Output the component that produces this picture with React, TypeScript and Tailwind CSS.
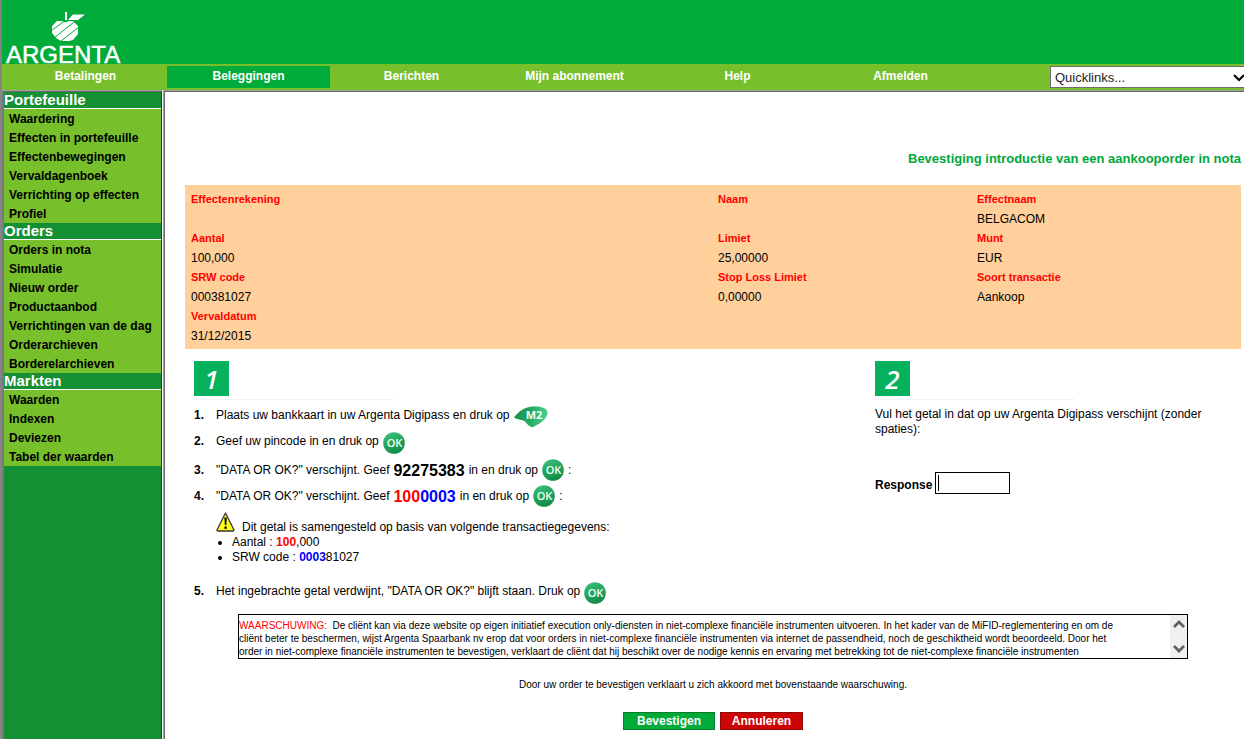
import type { ReactNode } from "react";

const tabs = ["Betalingen", "Beleggingen", "Berichten", "Mijn abonnement", "Help", "Afmelden"];

const menu = [
  {
    title: "Portefeuille",
    items: [
      "Waardering",
      "Effecten in portefeuille",
      "Effectenbewegingen",
      "Vervaldagenboek",
      "Verrichting op effecten",
      "Profiel",
    ],
  },
  {
    title: "Orders",
    items: [
      "Orders in nota",
      "Simulatie",
      "Nieuw order",
      "Productaanbod",
      "Verrichtingen van de dag",
      "Orderarchieven",
      "Borderelarchieven",
    ],
  },
  { title: "Markten", items: ["Waarden", "Indexen", "Deviezen", "Tabel der waarden"] },
];

const details = [
  ["Effectenrekening", ""],
  ["Naam", ""],
  ["Effectnaam", "BELGACOM"],
  ["Aantal", "100,000"],
  ["Limiet", "25,00000"],
  ["Munt", "EUR"],
  ["SRW code", "000381027"],
  ["Stop Loss Limiet", "0,00000"],
  ["Soort transactie", "Aankoop"],
  ["Vervaldatum", "31/12/2015"],
];

function Logo() {
  return (
    <svg width="124" height="64" viewBox="0 0 124 64" className="overflow-visible" role="img" aria-label="Argenta">
      <g fill="#fff">
        <path d="M61 12h2v8h-2z" />
        <path d="M64 20 L69 14.5 H81 L74 20z" />
        <path d="M53 21 h5 l3 1.5 4-1.5 h4 l5 5 v8 l-5 6 -4 1 h-8 l-5-3 -4-5 v-7z" />
      </g>
      <g stroke="#00ab39" strokeWidth="1" fill="none">
        <path d="M47 31 L61 20.500M50 38 L70 22M57 41 L75 27" />
      </g>
      <text
        x="2"
        y="63"
        fontSize="24"
        fill="#fff"
        stroke="#fff"
        strokeWidth="0.5"
        fontFamily="'Liberation Sans', Arial, sans-serif"
      >
        ARGENTA
      </text>
    </svg>
  );
}

function OkIcon() {
  return (
    <svg width="22" height="22" viewBox="0 0 22 22" className="shrink-0" role="img" aria-label="OK">
      <defs>
        <linearGradient id="okFill" x1="0.2" y1="0" x2="0.6" y2="1">
          <stop offset="0" stopColor="#3cc07c" />
          <stop offset="0.5" stopColor="#22a55d" />
          <stop offset="1" stopColor="#128a48" />
        </linearGradient>
      </defs>
      <circle cx="11" cy="11" r="10.8" fill="url(#okFill)" />
      <text x="11.500" y="15" textAnchor="middle" fontSize="11" fontWeight="600" fill="#f2fff6" fontFamily="'Open Sans', sans-serif">
        OK
      </text>
    </svg>
  );
}

function M2Icon() {
  return (
    <svg width="34" height="22" viewBox="0 0 34 22" className="shrink-0" role="img" aria-label="M2">
      <defs>
        <linearGradient id="m2Fill" x1="0" y1="0.4" x2="1" y2="0.5">
          <stop offset="0" stopColor="#168f4c" />
          <stop offset="0.5" stopColor="#25aa63" />
          <stop offset="1" stopColor="#4fd095" />
        </linearGradient>
      </defs>
      <path
        d="M0 11.500 C4 6 10 1 18 0.500 C27 0 33 2 33.500 6 C34 12 28 17 18 21.500 C15 20 13 18 11 15.500 C9 13.500 4 14 0 11.500z"
        fill="url(#m2Fill)"
      />
      <text x="20" y="12.500" textAnchor="middle" fontSize="11" fontWeight="700" fill="#f2fff6" fontFamily="'Open Sans', sans-serif">
        M2
      </text>
    </svg>
  );
}

function WarningIcon() {
  return (
    <svg width="19" height="20" viewBox="0 0 19 20" className="shrink-0" aria-hidden="true">
      <path d="M9.5 1 L18 18 Q18 19 17 19 H2 Q0.8 19 1 18z" fill="#ffff1a" stroke="#333" strokeWidth="1.3" strokeLinejoin="round" />
      <path d="M8.4 5.5 h2.4 l-0.5 7.5 h-1.4z" fill="#000" />
      <rect x="8.5" y="14.5" width="2.2" height="2.4" fill="#000" />
    </svg>
  );
}

function Chevron({ up = false, thin = false, className = "" }: { up?: boolean; thin?: boolean; className?: string }) {
  return (
    <svg width="12" height="9" viewBox="0 0 12 9" className={className} aria-hidden="true">
      <path
        d={up ? "M1 7 L6 2 L11 7" : "M1 2 L6 7 L11 2"}
        fill="none"
        stroke="currentColor"
        strokeWidth={thin ? 2 : 2.8}
      />
    </svg>
  );
}

function StepBadge({ children }: { children: ReactNode }) {
  return (
    <div className="flex h-[39px] w-[200px] border-b border-[#edf5f3]">
      <h2 className="flex h-[35px] w-[35px] items-center justify-center bg-[#05b15c] font-['Open_Sans',sans-serif] text-[26px] leading-none font-semibold text-white italic">
        {children}
      </h2>
    </div>
  );
}

function Step({ n, low = false, children }: { n: number; low?: boolean; children: ReactNode }) {
  return (
    <div className="flex h-[26px] items-center">
      <b className={low ? "w-[22px] pb-1" : "w-[22px]"}>{n}.</b>
      <div className="flex items-center gap-1 whitespace-nowrap">{children}</div>
    </div>
  );
}

export default function App() {
  return (
    <div className="flex min-h-screen flex-col overflow-x-hidden bg-white font-['Liberation_Sans',Arial,sans-serif] text-[12px] leading-[15px] text-black">
      <header className="border-l-2 border-[#848484] bg-[#00ab39]">
        <div className="h-16 pl-[2px]">
          <Logo />
        </div>
        <nav className="flex h-[26px] items-start bg-[#77bf2b] pt-[2px] pl-[2px]">
          {tabs.map((tab) => (
            <a
              key={tab}
              href="#"
              className={
                tab === "Beleggingen"
                  ? "h-[22px] w-[163px] bg-[#00ab39] text-center leading-5 font-bold text-white"
                  : "h-[22px] w-[163px] text-center leading-5 font-bold text-white"
              }
            >
              {tab}
            </a>
          ))}
          <div className="relative ml-auto w-[194px]">
            <select
              aria-label="Quicklinks"
              className="h-[22px] w-full appearance-none border border-r-0 border-[#6f6f6f] bg-white pl-1 text-[13px] text-[#222]"
            >
              <option>Quicklinks...</option>
            </select>
            <Chevron thin className="pointer-events-none absolute top-[7px] right-[-1px]" />
          </div>
        </nav>
      </header>

      <div className="flex flex-1">
        <aside className="flex w-[163px] shrink-0 border-t border-r border-l-2 border-t-[#a0a0a0] border-r-white border-l-[#848484]">
          <div className="flex-1 border-t border-r border-l-2 border-t-[#696969] border-r-[#0f4a4a] border-l-[#787878] bg-[#148f34]">
            {menu.map((group) => (
              <section key={group.title}>
                <h2 className="h-[17px] border-b border-white text-[15px] leading-4 font-bold text-white">
                  {group.title}
                </h2>
                <ul className="bg-[#77bf2b]">
                  {group.items.map((item) => (
                    <li key={item} className="h-[19px] pl-[5px] leading-5 font-bold whitespace-nowrap">
                      <a href="#">{item}</a>
                    </li>
                  ))}
                </ul>
              </section>
            ))}
          </div>
        </aside>

        <div className="flex flex-1 border-t border-l border-[#a0a0a0]">
          <main className="flex-1 border-t border-l border-[#696969] pr-[3px] pl-5">
            <h1 className="pt-[59px] text-right text-[13px] leading-4 font-bold text-[#00a83c]">
              Bevestiging introductie van een aankooporder in nota
            </h1>

            <dl className="mt-[18px] grid grid-cols-[527fr_259fr_264fr] bg-[#ffcf9c] py-1 pl-[6px]">
              {details.map(([label, value]) => (
                <div key={label}>
                  <dt className="text-[11px] leading-5 font-bold text-[#ff0000]">{label}</dt>
                  <dd className="h-[19px] leading-5">{value}</dd>
                </div>
              ))}
            </dl>

            <div className="grid grid-cols-[681fr_375fr] pt-3">
              <section className="pl-[9px]">
                <StepBadge>1</StepBadge>
                <div className="pt-1">
                  <Step n={1} low>
                    <span className="pb-1">Plaats uw bankkaart in uw Argenta Digipass en druk op</span>
                    <M2Icon />
                  </Step>
                  <Step n={2} low>
                    <span className="pb-1">Geef uw pincode in en druk op</span>
                    <OkIcon />
                  </Step>
                  <div className="pt-px">
                    <Step n={3}>
                      <span>"DATA OR OK?" verschijnt. Geef</span>
                      <b className="text-[16px]">92275383</b>
                      <span>in en druk op</span>
                      <OkIcon />
                      <span>:</span>
                    </Step>
                    <Step n={4}>
                      <span>"DATA OR OK?" verschijnt. Geef</span>
                      <b className="text-[16px] text-[#ff0000]">
                        100<span className="text-[#0000ff]">0003</span>
                      </b>
                      <span>in en druk op</span>
                      <OkIcon />
                      <span>:</span>
                    </Step>
                  </div>
                  <div className="pt-[3px] pl-[22px]">
                    <p className="flex items-end gap-[7px]">
                      <WarningIcon />
                      <span className="-mb-[3px]">Dit getal is samengesteld op basis van volgende transactiegegevens:</span>
                    </p>
                    <ul className="list-disc pt-[3px] pl-4">
                      <li>
                        Aantal : <b className="text-[#ff0000]">100</b>,000
                      </li>
                      <li>
                        SRW code : <b className="text-[#0000ff]">0003</b>81027
                      </li>
                    </ul>
                  </div>
                  <div className="pt-[15px]">
                    <Step n={5} low>
                      <span className="pb-1">Het ingebrachte getal verdwijnt, "DATA OR OK?" blijft staan. Druk op</span>
                      <OkIcon />
                    </Step>
                  </div>
                </div>
              </section>

              <section className="pl-[9px]">
                <StepBadge>2</StepBadge>
                <p className="pt-[7px]">Vul het getal in dat op uw Argenta Digipass verschijnt (zonder spaties):</p>
                <div className="mt-[35px] flex items-center gap-[3px]">
                  <label htmlFor="response" className="pt-1 font-bold">
                    Response
                  </label>
                  <div className="relative">
                    <input id="response" type="text" className="block h-[22px] w-[75px] border border-black bg-white px-[3px]" />
                    <span className="pointer-events-none absolute top-[3px] left-[3px] h-4 w-px bg-black" />
                  </div>
                </div>
              </section>
            </div>

            <div className="mt-2 mr-[53px] ml-[53px] flex h-[45px] border border-black">
              <div className="min-w-0 flex-1 overflow-hidden pt-1 text-[10px] leading-[13px] whitespace-nowrap">
                <p>
                  <span className="text-[#ff0000]">WAARSCHUWING:</span>&nbsp; De cliënt kan via deze website op eigen initiatief
                  execution only-diensten in niet-complexe financiële instrumenten uitvoeren. In het kader van de
                  MiFID-reglementering en om de
                  <br />
                  cliënt beter te beschermen, wijst Argenta Spaarbank nv erop dat voor orders in niet-complexe financiële
                  instrumenten via internet de passendheid, noch de geschiktheid wordt beoordeeld. Door het
                  <br />
                  order in niet-complexe financiële instrumenten te bevestigen, verklaart de cliënt dat hij beschikt over
                  de nodige kennis en ervaring met betrekking tot de niet-complexe financiële instrumenten
                </p>
              </div>
              <div className="flex w-[17px] flex-col items-center justify-between bg-[#f0f0f0] py-[5px] text-[#606060]">
                <button type="button" aria-label="Omhoog">
                  <Chevron up />
                </button>
                <button type="button" aria-label="Omlaag">
                  <Chevron />
                </button>
              </div>
            </div>

            <p className="mt-[18px] text-center text-[10px]">
              Door uw order te bevestigen verklaart u zich akkoord met bovenstaande waarschuwing.
            </p>

            <div className="mt-5 mb-2 flex justify-center gap-[5px]">
              <button
                type="button"
                className="h-[18px] w-[92px] border border-[#0c7a2a] bg-[#00ab39] leading-4 font-bold text-white"
              >
                Bevestigen
              </button>
              <button
                type="button"
                className="h-[18px] w-[83px] border border-[#8c0a0a] bg-[#cc0404] leading-4 font-bold text-white"
              >
                Annuleren
              </button>
            </div>
          </main>
        </div>
      </div>
    </div>
  );
}
